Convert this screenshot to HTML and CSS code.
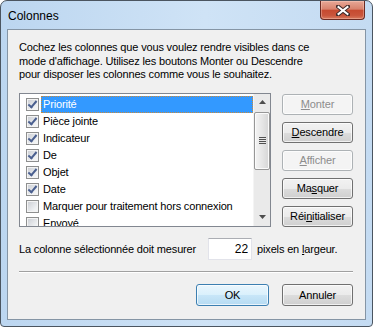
FILE: index.html
```html
<!DOCTYPE html>
<html lang="fr">
  <head>
    <meta charset="UTF-8" />
    <title>Colonnes</title>
    <link rel="stylesheet" href="styles.css">
  </head>
  <body>
    <div class="window">
      <div class="titlebar">
        <span class="title">Colonnes</span>
        <button class="close" aria-label="Fermer">
          <svg width="14" height="11" viewBox="0 0 14 11">
            <path d="M2 1.5 L12 9.5 M12 1.5 L2 9.5" stroke="#3d2a2a" stroke-width="4" stroke-linecap="square" />
            <path d="M2.5 2 L11.5 9 M11.5 2 L2.5 9" stroke="#ffffff" stroke-width="2" stroke-linecap="square" />
          </svg>
        </button>
      </div>

      <div class="client">
        <p class="intro">
          Cochez les colonnes que vous voulez rendre visibles dans ce<br>
          mode d'affichage. Utilisez les boutons Monter ou Descendre<br>
          pour disposer les colonnes comme vous le souhaitez.
        </p>

        <div class="main">
          <div class="listbox">
            <ul class="items">
              <li class="item selected"><span class="check checked"></span><span class="label">Priorité</span></li>
              <li class="item"><span class="check checked"></span><span class="label">Pièce jointe</span></li>
              <li class="item"><span class="check checked"></span><span class="label">Indicateur</span></li>
              <li class="item"><span class="check checked"></span><span class="label">De</span></li>
              <li class="item"><span class="check checked"></span><span class="label">Objet</span></li>
              <li class="item"><span class="check checked"></span><span class="label">Date</span></li>
              <li class="item"><span class="check"></span><span class="label">Marquer pour traitement hors connexion</span></li>
              <li class="item"><span class="check"></span><span class="label">Envoyé</span></li>
            </ul>
            <div class="scrollbar">
              <div class="arrow">
                <svg width="7" height="4" viewBox="0 0 7 4"><polygon points="0,4 7,4 3.5,0" fill="#4d4d4d" /></svg>
              </div>
              <div class="thumb"><span class="grip"></span></div>
              <div class="track"></div>
              <div class="arrow">
                <svg width="7" height="4" viewBox="0 0 7 4"><polygon points="0,0 7,0 3.5,4" fill="#4d4d4d" /></svg>
              </div>
            </div>
          </div>

          <div class="side-buttons">
            <button class="btn" disabled><u>M</u>onter</button>
            <button class="btn"><u>D</u>escendre</button>
            <button class="btn" disabled><u>A</u>fficher</button>
            <button class="btn">Ma<u>s</u>quer</button>
            <button class="btn">Réi<u>n</u>itialiser</button>
          </div>
        </div>

        <div class="width-row">
          <span>La colonne sélectionnée doit mesurer</span>
          <input class="width-input" type="text" value="22" />
          <span>pixels en <u>l</u>argeur.</span>
        </div>

        <hr class="sep">

        <div class="footer">
          <button class="btn btn-default">OK</button>
          <button class="btn">Annuler</button>
        </div>
      </div>
    </div>
  </body>
</html>
```

FILE: styles.css
```css
* {
  box-sizing: border-box;
}

body {
  margin: 0;
  padding: 0;
  background: #ffffff;
  font-family: "Liberation Sans", Arial, sans-serif;
  font-size: 11px;
  color: #000000;
}

.window {
  width: 373px;
  height: 327px;
  display: flex;
  flex-direction: column;
  padding: 0 6px 6px;
  border: 1px solid #4b5560;
  border-radius: 7px 7px 4px 4px;
  background: linear-gradient(to right, #bcd6f0, #cfe3f6 55%, #c4dbf2);
}

.titlebar {
  height: 28px;
  display: flex;
  align-items: flex-start;
  justify-content: space-between;
}

.title {
  font-size: 12px;
  padding: 8px 0 0 1px;
  color: #000000;
}

.close {
  width: 45px;
  height: 19px;
  margin-right: 1px;
  padding: 0;
  display: flex;
  align-items: center;
  justify-content: center;
  border: 1px solid #6b2a22;
  border-top: none;
  border-radius: 0 0 4px 4px;
  background: linear-gradient(#e7a897 0%, #d8826d 45%, #c64a30 52%, #c9553c 80%, #d97a5e 100%);
  box-shadow: inset 0 0 0 1px rgba(255, 220, 210, 0.35);
}

.client {
  flex: 1;
  display: flex;
  flex-direction: column;
  padding: 11px 12px 0 11px;
  background: #f0f0f0;
  border: 1px solid #8595a5;
  letter-spacing: -0.16px;
}

.intro {
  margin: 0;
  line-height: 13.5px;
}

.main {
  display: flex;
  gap: 11px;
  margin-top: 11px;
}

.listbox {
  width: 252px;
  height: 134px;
  display: flex;
  background: #ffffff;
  border: 1px solid #828790;
  overflow: hidden;
}

.items {
  flex: 1;
  margin: 0;
  padding: 2px 0 0;
  list-style: none;
}

.item {
  height: 17px;
  display: flex;
  align-items: center;
  white-space: nowrap;
}

.check {
  width: 13px;
  height: 13px;
  flex-shrink: 0;
  margin: 0 2px 0 6px;
  border: 1px solid #8e8f8f;
  background: linear-gradient(135deg, #c9ccd2, #eef0f2 70%, #f8f8f8);
  box-shadow: inset 0 0 0 1px #f4f4f4;
  position: relative;
}

.check.checked::after {
  content: "";
  position: absolute;
  left: 3px;
  top: 0;
  width: 3px;
  height: 7px;
  border: solid #4a5f8f;
  border-width: 0 2px 2px 0;
  transform: rotate(40deg);
}

.label {
  flex: 1;
  height: 17px;
  line-height: 15px;
  padding: 0 2px 0 1px;
  border: 1px solid transparent;
  color: #000000;
}

.item.selected .label {
  background: #3399ff;
  color: #ffffff;
  border: 1px dotted #c98a3c;
}

.scrollbar {
  width: 17px;
  flex-shrink: 0;
  display: flex;
  flex-direction: column;
  background: #eaeaea;
  border-left: 1px solid #f4f4f4;
}

.arrow {
  height: 17px;
  display: flex;
  align-items: center;
  justify-content: center;
}

.thumb {
  height: 58px;
  margin: 1px 0 0;
  display: flex;
  align-items: center;
  justify-content: center;
  border: 1px solid #979797;
  border-radius: 2px;
  background: linear-gradient(to right, #f4f4f4, #e6e6e6 50%, #d6d6d6);
  box-shadow: inset 0 0 0 1px #fbfbfb;
}

.grip {
  width: 7px;
  height: 7px;
  background: repeating-linear-gradient(#505050 0 1px, #e8e8e8 1px 2px);
}

.track {
  flex: 1;
}

.side-buttons {
  display: flex;
  flex-direction: column;
  gap: 7px;
  margin-top: 1px;
}

.btn {
  width: 71px;
  height: 21px;
  padding: 0;
  font-family: "Liberation Sans", Arial, sans-serif;
  font-size: 11px;
  letter-spacing: -0.16px;
  color: #000000;
  border: 1px solid #707070;
  border-radius: 3px;
  background: linear-gradient(#f2f2f2 0%, #ebebeb 50%, #dddddd 50%, #cfcfcf 100%);
  box-shadow: inset 0 0 0 1px rgba(255, 255, 255, 0.7);
}

.btn:disabled {
  color: #8d8d8d;
  border-color: #adb2b5;
  background: #f4f4f4;
}

.btn-default {
  width: 73px;
  border-color: #3c7fb1;
  background: linear-gradient(#eaf6fd 0%, #d9f0fc 50%, #c8e6f8 50%, #b6dbf2 100%);
}

.width-row {
  display: flex;
  align-items: center;
  margin-top: 11px;
}

.width-input {
  width: 44px;
  height: 22px;
  margin: 0 5px 0 12px;
  padding: 0 3px 0 0;
  text-align: right;
  font-family: "Liberation Sans", Arial, sans-serif;
  font-size: 12px;
  border: 1px solid #e2e3ea;
  border-top-color: #abadb3;
  background: #ffffff;
}

.sep {
  width: 100%;
  margin: 11px 0 0;
  border: none;
  border-top: 1px solid #a0a0a0;
  border-bottom: 1px solid #ffffff;
}

.footer {
  display: flex;
  justify-content: flex-end;
  gap: 13px;
  margin-top: 11px;
}

.footer .btn {
  height: 22px;
}
```
